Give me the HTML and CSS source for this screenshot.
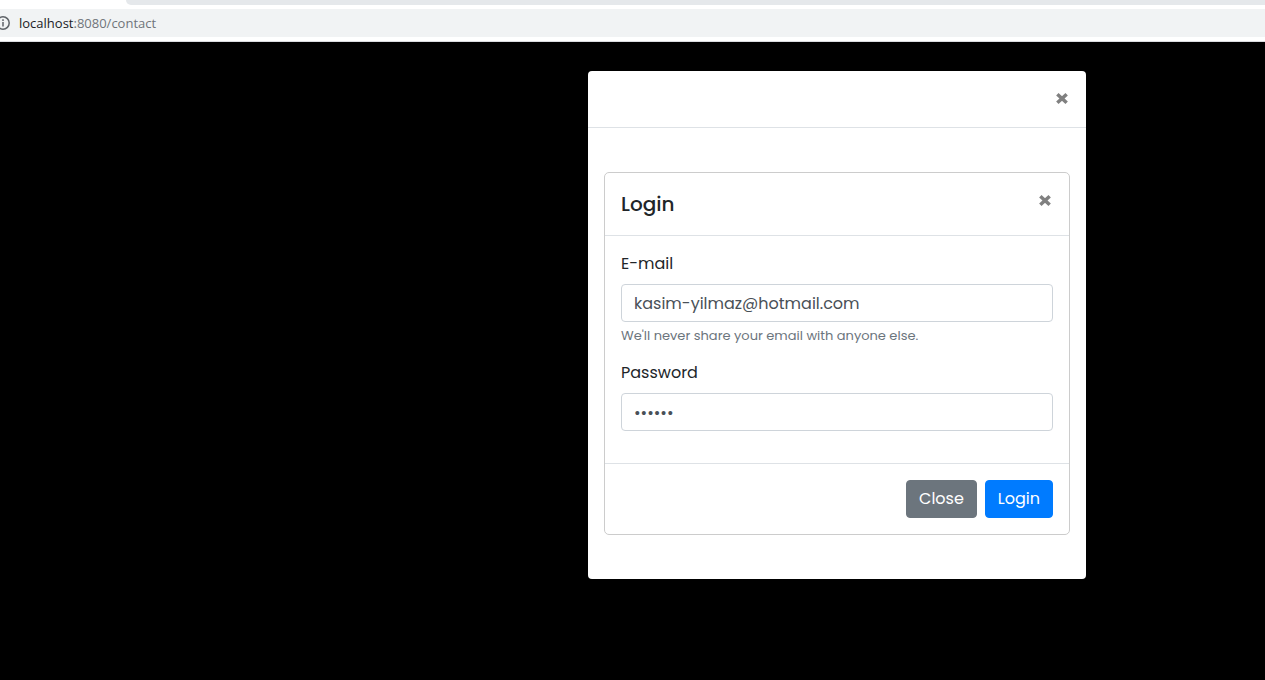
FILE: index.html
```html
<!DOCTYPE html>
<html lang="en">
<head>
<meta charset="utf-8">
<title>Login</title>
<link rel="stylesheet" href="styles.css">
</head>
<body>
<header class="browser">
  <div class="tab-strip"></div>
  <div class="address-bar">
    <svg class="info-icon" viewBox="0 0 14 14" aria-hidden="true"><circle cx="7" cy="7" r="6.2"/><path d="M7 6v4.5M7 3.3v1.6"/></svg>
    <span class="url"><span class="host">localhost</span>:8080/contact</span>
  </div>
</header>
<main class="backdrop">
  <section class="modal">
    <div class="modal-top">
      <button class="dismiss" type="button" aria-label="Close window"><svg viewBox="0 0 12 12" aria-hidden="true"><path d="M2 2.3l8 7.4M10 2.3l-8 7.4"/></svg></button>
    </div>
    <div class="modal-body">
      <form class="card">
        <div class="card-header">
          <h1 class="title">Login</h1>
          <button class="dismiss" type="button" aria-label="Close login"><svg viewBox="0 0 12 12" aria-hidden="true"><path d="M2 2.3l8 7.4M10 2.3l-8 7.4"/></svg></button>
        </div>
        <div class="card-body">
          <div class="field">
            <label for="email">E-mail</label>
            <input class="control" id="email" type="email" value="kasim-yilmaz@hotmail.com">
            <small class="hint">We'll never share your email with anyone else.</small>
          </div>
          <div class="field">
            <label for="password">Password</label>
            <input class="control" id="password" type="password" value="secret" autocomplete="off">
          </div>
        </div>
        <div class="card-footer">
          <button class="btn btn-secondary" type="button">Close</button>
          <button class="btn btn-primary" type="submit">Login</button>
        </div>
      </form>
    </div>
  </section>
</main>
</body>
</html>
```
FILE: styles.css
```css
* { box-sizing: border-box; }
body {
  margin: 0;
  min-height: 100vh;
  display: flex;
  flex-direction: column;
  background: #000;
  color: #212529;
  font: 16px/24px Poppins, Inter, sans-serif;
}
.browser {
  background: #fff;
  border-bottom: 1px solid #dadce0;
  padding-bottom: 4px;
}
.tab-strip {
  height: 5px;
  margin: 0 0 4px 126px;
  background: #e5e8eb;
  border-bottom-left-radius: 5px;
}
.address-bar {
  height: 28px;
  display: flex;
  align-items: center;
  gap: 9px;
  background: #f1f3f4;
  color: #70757a;
  font: 13px/20px "Open Sans", sans-serif;
}
.info-icon {
  width: 14px;
  height: 14px;
  margin-left: -4px;
  fill: none;
  stroke: #5f6368;
  stroke-width: 1.5;
}
.host { color: #202124; }
.backdrop {
  flex: 1;
  display: flex;
  justify-content: flex-end;
  align-items: flex-start;
  padding: 29px 179px 29px 16px;
}
.modal {
  width: 100%;
  max-width: 498px;
  background: #fff;
  border-radius: 4px;
}
.modal-top {
  display: flex;
  justify-content: flex-end;
  padding: 19px 16px 20px;
  border-bottom: 1px solid #dee2e6;
}
.dismiss {
  display: flex;
  padding: 1px;
  border: 0;
  background: none;
}
.dismiss svg {
  width: 14px;
  height: 15px;
  fill: none;
  stroke: #808080;
  stroke-width: 3;
}
.modal-body { padding: 44px 16px; }
.card {
  border: 1px solid #ccc;
  border-radius: 5px;
}
.card-header {
  display: flex;
  justify-content: space-between;
  align-items: flex-start;
  padding: 16px;
  border-bottom: 1px solid #dee2e6;
}
.card-header .dismiss { margin-top: 3px; }
.title {
  margin: 0;
  font-size: 20px;
  line-height: 30px;
  font-weight: 500;
}
.card-body { padding: 16px; }
.field { margin-bottom: 16px; }
.field label {
  display: block;
  margin-bottom: 8px;
}
.control {
  display: block;
  width: 100%;
  height: 38px;
  padding: 6px 12px;
  border: 1px solid #ced4da;
  border-radius: 4px;
  background: #fff;
  color: #495057;
  font: inherit;
}
.hint {
  display: block;
  margin-top: 4px;
  color: #6c757d;
  font-size: 13px;
  line-height: 19px;
}
.card-footer {
  display: flex;
  justify-content: flex-end;
  gap: 8px;
  padding: 16px;
  border-top: 1px solid #dee2e6;
}
.btn {
  padding: 6px 12px;
  border: 1px solid;
  border-radius: 4px;
  color: #fff;
  font: inherit;
}
.btn-secondary { background: #6c757d; border-color: #6c757d; }
.btn-primary { background: #007bff; border-color: #007bff; }
```
